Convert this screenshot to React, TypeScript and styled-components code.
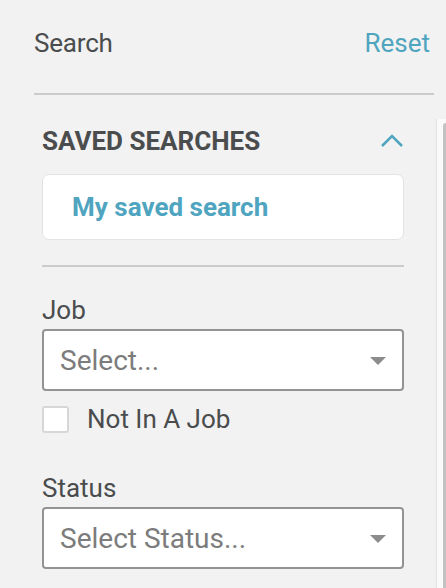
import React from 'react';
import styled, { createGlobalStyle } from 'styled-components';

const GlobalStyle = createGlobalStyle`
  html, body {
    margin: 0;
    padding: 0;
    background: #f2f2f2;
    overflow: hidden;
  }
  body {
    font-family: Roboto, "Liberation Sans", sans-serif;
    color: #4a4c4d;
  }
`;

const Page = styled.div`
  display: flex;
  flex-direction: column;
  padding-left: 34px;
  width: 412px;
`;

const HeaderBlock = styled.div`
  display: flex;
  flex-direction: column;
  width: 400px;
`;

const Header = styled.div`
  display: flex;
  justify-content: space-between;
  align-items: baseline;
  padding-top: 28px;
  font-size: 26px;
  line-height: 30px;
  letter-spacing: -0.2px;
`;

const Title = styled.span`
  color: #4a4c4d;
`;

const LinkButton = styled.button`
  border: 0;
  background: none;
  padding: 0;
  margin-right: 4px;
  font: inherit;
  color: #4fa5bf;
  cursor: pointer;
`;

const Rule = styled.hr<{ $top: number }>`
  border: 0;
  height: 2px;
  background: #cbcbcb;
  margin: ${p => p.$top}px 0 0 0;
  align-self: stretch;
`;

const Body = styled.div`
  display: flex;
  margin-top: 24px;
  height: 480px;
`;

const Content = styled.div`
  display: flex;
  flex-direction: column;
  width: 362px;
  margin-left: 8px;
  padding-top: 7px;
`;

const Track = styled.div`
  margin-left: auto;
  width: 9px;
  border-left: 1px solid #e2e2e2;
  background: #fafafa;
  display: flex;
  justify-content: flex-end;
`;

const Thumb = styled.div`
  width: 3px;
  margin-top: 4px;
  background: #c2c2c2;
  border-radius: 3px 0 0 0;
`;

const SectionHead = styled.div`
  display: flex;
  justify-content: space-between;
  align-items: center;
  font-size: 26px;
  line-height: 30px;
  font-weight: 700;
  color: #4a4c4d;
`;

const Chevron = styled.svg`
  width: 24px;
  height: 14px;
`;

const SavedCard = styled.div`
  margin-top: 18px;
  height: 66px;
  box-sizing: border-box;
  display: flex;
  align-items: center;
  padding: 0 29px;
  background: #fff;
  border: 1.5px solid #e3e3e3;
  border-radius: 7px;
  font-size: 26px;
  line-height: 30px;
  font-weight: 700;
  color: #4fa5bf;
`;

const Label = styled.div<{ $top: number }>`
  margin-top: ${p => p.$top}px;
  font-size: 26px;
  line-height: 30px;
  color: #4a4c4d;
`;

const SelectBox = styled.div`
  margin-top: 4px;
  height: 62px;
  box-sizing: border-box;
  display: flex;
  align-items: center;
  justify-content: space-between;
  padding: 0 16px;
  background: #fff;
  border: 2px solid #939393;
  border-radius: 4px;
  font-size: 28px;
  color: #7c7c7c;
`;

const Caret = styled.svg`
  width: 16px;
  height: 8px;
  margin-top: 2px;
`;

const CheckRow = styled.label`
  display: flex;
  align-items: center;
  gap: 18px;
  margin-top: 13px;
  font-size: 26px;
  line-height: 30px;
  color: #4a4c4d;
`;

const Box = styled.span`
  width: 27px;
  height: 27px;
  box-sizing: border-box;
  background: #fff;
  border: 2px solid #d6d8d8;
  border-radius: 3px;
`;

const Select = ({ placeholder }: { placeholder: string }) => (
  <SelectBox>
    <span>{placeholder}</span>
    <Caret viewBox="0 0 16 8">
      <path d="M0 0h16l-8 8z" fill="#8c8c8c" />
    </Caret>
  </SelectBox>
);

export default function App() {
  return (
    <>
      <GlobalStyle />
      <Page>
        <HeaderBlock>
          <Header>
            <Title>Search</Title>
            <LinkButton>Reset</LinkButton>
          </Header>
          <Rule $top={35} />
        </HeaderBlock>
        <Body>
          <Content>
            <SectionHead>
              <span>SAVED SEARCHES</span>
              <Chevron viewBox="0 0 24 14">
                <path d="M2 12l10-10 10 10" fill="none" stroke="#4fa5bf" strokeWidth="2.5" />
              </Chevron>
            </SectionHead>
            <SavedCard>My saved search</SavedCard>
            <Rule $top={25} />
            <Label $top={28}>Job</Label>
            <Select placeholder="Select..." />
            <CheckRow>
              <Box />
              Not In A Job
            </CheckRow>
            <Label $top={39}>Status</Label>
            <Select placeholder="Select Status..." />
          </Content>
          <Track>
            <Thumb />
          </Track>
        </Body>
      </Page>
    </>
  );
}
